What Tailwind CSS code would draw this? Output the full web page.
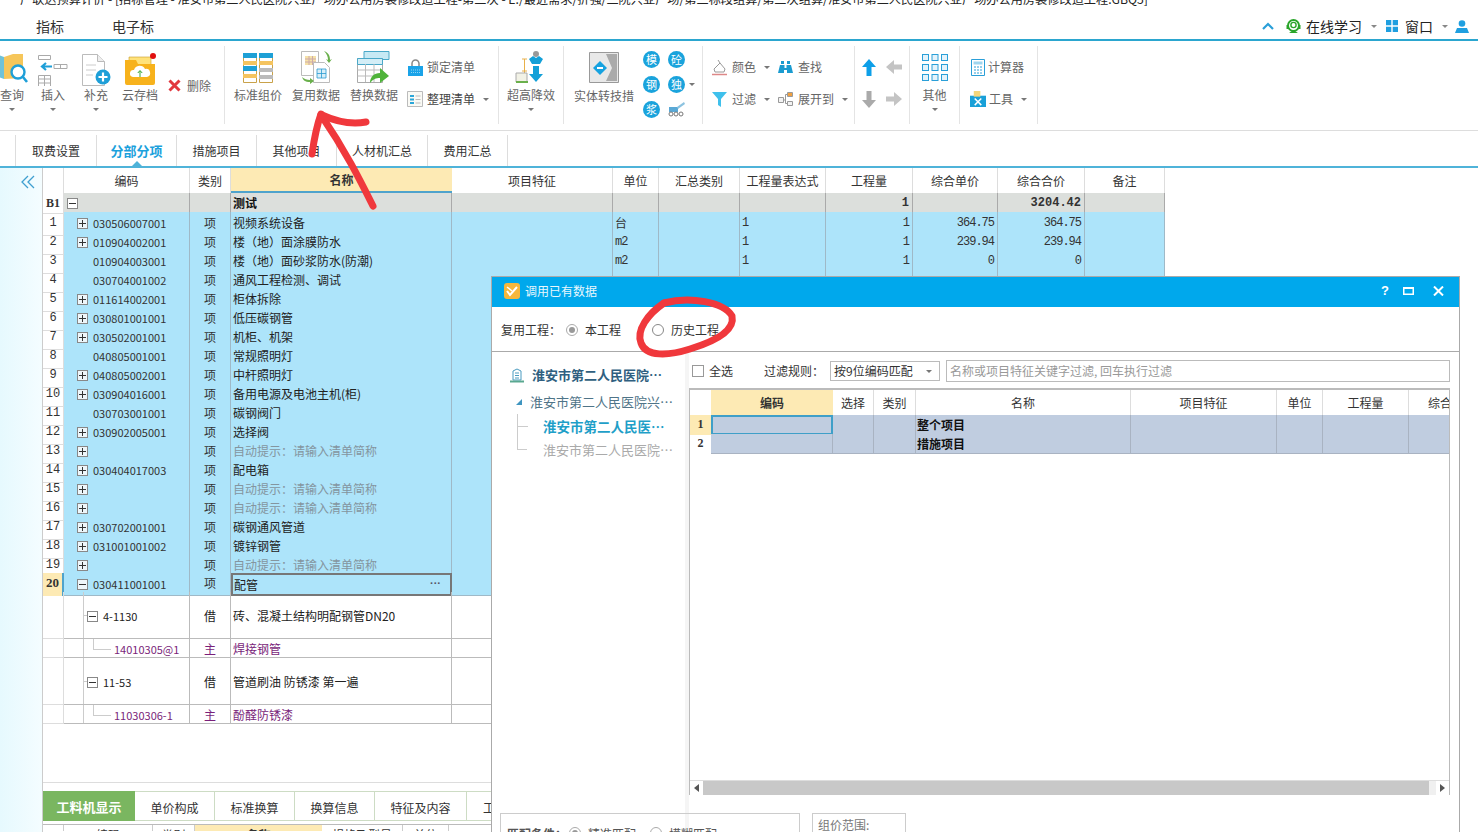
<!DOCTYPE html>
<html lang="zh-CN">
<head>
<meta charset="UTF-8">
<title>广联达预算计价</title>
<script src="https://cdn.jsdelivr.net/npm/@tailwindcss/browser@4"></script>
</head>
<body class="bg-white">
<div class="relative w-[1478px] h-[832px] overflow-hidden bg-white text-[12px] text-[#333] font-['Noto_Sans_CJK_SC',sans-serif]">

  <!-- title bar, cut off at the top -->
  <div class="h-[8px] overflow-hidden pl-[20px]">
    <div class="-mt-[10px] text-[12.2px] leading-[18px] whitespace-nowrap text-[#222]">广联达预算计价 - [招标管理 - 淮安市第二人民医院兴亚广场办公用房装修改造工程-第二次 - E:/最近需求/折强/二院兴亚广场/第二标段组算/第二次组算/淮安市第二人民医院兴亚广场办公用房装修改造工程.GBQ5]</div>
  </div>

  <!-- menu row -->
  <div class="h-[33px] border-b-[2px] border-[#2ba6cf] flex items-center text-[14px] text-[#333] pt-[5px]">
    <span class="ml-[36px]">指标</span>
    <span class="ml-[48px]">电子标</span>
    <div class="ml-auto flex items-center text-[#222]">
      <svg width="12" height="8" viewBox="0 0 12 8" class="mr-[11px]"><path d="M1 7l5-5 5 5" fill="none" stroke="#2a9fd8" stroke-width="2.2"/></svg>
      <svg width="17" height="17" viewBox="0 0 17 17" class="mr-[4px]"><circle cx="8.5" cy="7.5" r="5.5" fill="none" stroke="#2aa52a" stroke-width="2"/><circle cx="8.5" cy="7" r="2.6" fill="none" stroke="#2aa52a" stroke-width="1.4"/><path d="M1.5 7h2v4h-2zM13.5 7h2v4h-2zM4 15l4.500-3 4.500 3z" fill="#2aa52a"/></svg>
      <span>在线学习</span>
      <i class="ml-[9px] w-0 h-0 border-x-[3px] border-t-[3px] border-x-transparent border-t-[#888]"></i>
      <svg width="12" height="12" viewBox="0 0 12 12" class="ml-[9px]"><path d="M0 0h5.300v5.300H0zM6.700 0H12v5.300H6.700zM0 6.700h5.300V12H0zM6.700 6.700H12V12H6.700z" fill="#1f9fe0"/></svg>
      <span class="ml-[7px]">窗口</span>
      <i class="ml-[9px] w-0 h-0 border-x-[3px] border-t-[3px] border-x-transparent border-t-[#888]"></i>
      <svg width="14" height="13" viewBox="0 0 14 13" class="ml-[7px] mr-[9px]"><circle cx="7" cy="3.500" r="3.300" fill="#1f9fe0"/><path d="M0 13l2-5h10l2 5z" fill="#1f9fe0"/></svg>
    </div>
  </div>

  <!-- ribbon -->
  <div class="h-[90px] border-b border-[#ddd] flex pt-[5px] text-[#666] leading-[16px]">
    <div class="-ml-[4px] w-[229px] h-[78px] border-r border-[#e4e4e4] flex">
      <div class="w-[32px] flex flex-col items-center overflow-hidden">
        <svg width="36" height="36" viewBox="0 0 36 36" class="mt-[4px] shrink-0"><path d="M2 4l8 3v22l-8-3z" fill="#6fc2d8"/><path d="M10 7l9-3h10v24l-19 1z" fill="#f6c65a"/><circle cx="24" cy="22" r="6.500" fill="#fff" stroke="#1e9fd8" stroke-width="2.400"/><path d="M29 27l4 5" stroke="#1e9fd8" stroke-width="2.600"/></svg>
        <span class="mt-[1px] shrink-0 whitespace-nowrap">查询</span>
        <i class="mt-[5px] w-0 h-0 border-x-[3px] border-t-[3px] border-x-transparent border-t-[#777]"></i>
      </div>
      <div class="w-[50px] flex flex-col items-center">
        <svg width="32" height="32" viewBox="0 0 32 32" class="mt-[8px]"><path d="M1.500 1.500h12v4h-12zM1.500 21.500h12v11h-12zM1.500 25h12M1.500 29h12M7.500 21.500v11M17 10.500h13v4H17zM23.500 10.500v4" fill="none" stroke="#aaa"/><path d="M15 12.500H6M9 9l-4 3.500L9 16" fill="none" stroke="#1e9fd8" stroke-width="2.200"/></svg>
        <span class="mt-[1px]">插入</span>
        <i class="mt-[5px] w-0 h-0 border-x-[3px] border-t-[3px] border-x-transparent border-t-[#777]"></i>
      </div>
      <div class="w-[36px] flex flex-col items-center">
        <svg width="32" height="32" viewBox="0 0 32 32" class="mt-[8px]"><path d="M2.500 .5h15l7 7v24h-22z" fill="#fff" stroke="#bbb"/><path d="M17.500 .5v7h7" fill="#eee" stroke="#bbb"/><path d="M6 11h10M6 16h10M6 21h7" stroke="#ccc"/><circle cx="23" cy="23" r="7.500" fill="#1e9fd8"/><path d="M18.500 23h9M23 18.500v9" stroke="#fff" stroke-width="2.200"/></svg>
        <span class="mt-[1px]">补充</span>
        <i class="mt-[5px] w-0 h-0 border-x-[3px] border-t-[3px] border-x-transparent border-t-[#777]"></i>
      </div>
      <div class="w-[52px] flex flex-col items-center">
        <svg width="32" height="34" viewBox="0 0 32 34" class="mt-[6px]"><path d="M5 5h22v12H5z" fill="#ffe27a" stroke="#c79a2a" stroke-width=".6"/><path d="M1 8h11l2 4h17v19a2 2 0 0 1-2 2H3a2 2 0 0 1-2-2z" fill="#f7b21c"/><path d="M9 25a3.500 3.500 0 0 1 1-7 6 6 0 0 1 11-1 4 4 0 0 1 2 8z" fill="#fff"/><path d="M16 25v-6M13.800 21l2.200-2.500 2.200 2.500" fill="none" stroke="#36a436"/><circle cx="29" cy="4" r="3" fill="#e00f0f"/></svg>
        <span class="mt-[1px]">云存档</span>
        <i class="mt-[5px] w-0 h-0 border-x-[3px] border-t-[3px] border-x-transparent border-t-[#777]"></i>
      </div>
      <div class="flex-1 flex items-center pl-[2px] pb-[3px] h-[78px]">
        <svg width="13" height="13" viewBox="0 0 13 13" class="mt-[3px]"><path d="M1.500 1.500l10 10M11.500 1.500l-10 10" stroke="#e2383f" stroke-width="3"/></svg>
        <span class="ml-[6px] mt-[4px]">删除</span>
      </div>
    </div>

    <div class="w-[274px] h-[78px] border-r border-[#e4e4e4] flex">
      <div class="w-[66px] flex flex-col items-center">
        <svg width="32" height="32" viewBox="0 0 32 32" class="mt-[6px]"><path d="M1.500 1.500h13v29h-13zM17.500 1.500h13v29h-13z" fill="#fff" stroke="#c9a24a"/><path d="M1 1h14v5H1zM17 1h14v5H17zM1 14h14v5H1z" fill="#1ea0d6"/><path d="M1 9h14v4H1zM1 22h14v4H1zM17 9h14v4H17z" fill="#f5c45f"/><path d="M17 16h14v4H17zM17 23h14v4H17z" fill="#bbb"/></svg>
        <span class="mt-[3px] whitespace-nowrap">标准组价</span>
      </div>
      <div class="w-[50px] flex flex-col items-center">
        <svg width="32" height="34" viewBox="0 0 32 34" class="mt-[4px]"><path d="M1.500 1.500h17v24h-17z" fill="#fff" stroke="#bbb"/><path d="M5 6h11v9H5z" fill="#f6e2a8"/><path d="M5 9h11M5 12h11M9 6v9M12.500 6v9" stroke="#caa"/><path d="M13.500 12.500h11l5 5v15h-16z" fill="#fff" stroke="#bbb"/><path d="M17 19h9v9h-9zM17 23.500h9M21.500 19v9" fill="#d8eef8" stroke="#2a9bd0" stroke-width=".8"/><path d="M24 1c5 2 6 5 6 9l2-1-3 4-3-4 2 1c0-3-1-6-4-9z" fill="#6ab04c"/><path d="M2 27c1 3 3 5 8 5v2l4-3-4-3v2c-3 0-6-1-8-3z" fill="#6ab04c"/></svg>
        <span class="mt-[3px] whitespace-nowrap">复用数据</span>
      </div>
      <div class="w-[66px] flex flex-col items-center">
        <svg width="34" height="33" viewBox="0 0 34 33" class="mt-[5px]"><path d="M7 .5h25v8H7z" fill="#c7e9f4" stroke="#4aa8c8"/><path d="M.5 7.500h25v24H.5z" fill="#fff" stroke="#aaa"/><path d="M.5 7.500h25v6H.5z" fill="#d4eef7" stroke="#4aa8c8"/><path d="M.5 19h25M.5 25h25M8.500 13v18M17 13v18" stroke="#bbb"/><path d="M13 32c0-6 4-10 10-10v-5l9 8-9 7v-5c-4 0-7 1-10 5z" fill="#4fb33a"/></svg>
        <span class="mt-[3px] whitespace-nowrap">替换数据</span>
      </div>
      <div class="flex-1 flex flex-col pt-[10px]">
        <div class="flex items-center h-[22px]">
          <svg width="15" height="17" viewBox="0 0 15 17" class="ml-[1px]"><path d="M4 8V4.500a3.500 3.500 0 0 1 7 0V8" fill="none" stroke="#888" stroke-width="1.500"/><path d="M0 7h15v10H0z" fill="#1aa3e8"/><path d="M3 11h9M3 13.500h9" stroke="#8fd4f5" stroke-dasharray="1 1"/></svg>
          <span class="ml-[4px] whitespace-nowrap">锁定清单</span>
        </div>
        <div class="flex items-center h-[22px] mt-[10px]">
          <svg width="16" height="16" viewBox="0 0 16 16"><path d="M.5.5h15v15H.5z" fill="#fafaf5" stroke="#bbb"/><path d="M3 4h4v2H3zM3 7.500h4v2H3zM3 11h4v2H3z" fill="#2ba6d8"/><path d="M8.500 5h5M8.500 8.500h5M8.500 12h5" stroke="#bbb"/></svg>
          <span class="ml-[4px] whitespace-nowrap text-[#444]">整理清单</span>
          <i class="ml-[8px] w-0 h-0 border-x-[3px] border-t-[3px] border-x-transparent border-t-[#777]"></i>
        </div>
      </div>
    </div>

    <div class="w-[65px] h-[78px] border-r border-[#e4e4e4] flex flex-col items-center">
      <svg width="32" height="34" viewBox="0 0 32 34" class="mt-[5px]"><path d="M7 8h5M9.500 8v24M7 20h5" stroke="#e8b04a" fill="none"/><path d="M1 22h11v9H1z" fill="#f2f2e6" stroke="#aaa"/><path d="M1 31h12" stroke="#6ab04c" stroke-width="2"/><circle cx="21" cy="3" r="3" fill="#999"/><path d="M14 8l4-3 3 2 3-2 4 3-3 5h-8z" fill="#13a0d8"/><path d="M18 15h6v8h4l-7 8-7-8h4z" fill="#13a0d8"/></svg>
      <span class="mt-[2px] whitespace-nowrap">超高降效</span>
      <i class="mt-[5px] w-0 h-0 border-x-[3px] border-t-[3px] border-x-transparent border-t-[#777]"></i>
    </div>

    <div class="w-[139px] h-[78px] border-r border-[#e4e4e4] flex">
      <div class="w-[80px] flex flex-col items-center">
        <svg width="30" height="31" viewBox="0 0 30 31" class="mt-[6px]"><path d="M.5.5h29v30H.5z" fill="#e8e8e8" stroke="#999"/><path d="M17 2h11v27H17l6-13z" fill="#aaa"/><path d="M11 9l7 7-7 7-7-7z" fill="#16a2e0"/><path d="M8 16h6" stroke="#fff" stroke-width="2"/></svg>
        <span class="mt-[5px] whitespace-nowrap">实体转技措</span>
      </div>
      <div class="flex-1 grid grid-cols-[25px_25px] auto-rows-[25px] justify-start pt-[5px] -ml-[5px] text-white text-[11px] text-center leading-[17px]">
        <span class="w-[17px] h-[17px] rounded-full bg-[#1aa3dc] justify-self-center">模</span>
        <span class="w-[17px] h-[17px] rounded-full bg-[#1aa3dc] justify-self-center">砼</span>
        <span class="w-[17px] h-[17px] rounded-full bg-[#1aa3dc] justify-self-center">钢</span>
        <span class="w-[17px] h-[17px] rounded-full bg-[#1aa3dc] justify-self-center relative">独<i class="absolute left-[21px] top-[7px] w-0 h-0 border-x-[3px] border-t-[3px] border-x-transparent border-t-[#777]"></i></span>
        <span class="w-[17px] h-[17px] rounded-full bg-[#1aa3dc] justify-self-center">浆</span>
        <svg width="17" height="16" viewBox="0 0 17 16" class="justify-self-center"><path d="M1 6h9v5H1z" fill="#5aa9d6"/><path d="M9 6l7-5 1 2-7 5z" fill="#8cc3e0"/><circle cx="3" cy="13" r="2" fill="none" stroke="#777"/><circle cx="8" cy="13" r="2" fill="none" stroke="#777"/><circle cx="13" cy="13" r="2" fill="none" stroke="#777"/></svg>
      </div>
    </div>

    <div class="w-[152px] h-[78px] border-r border-[#e4e4e4] flex flex-col pl-[8px] pt-[10px]">
      <div class="flex items-center h-[22px]">
        <svg width="17" height="17" viewBox="0 0 17 17"><path d="M3 10l6-6 5 6-1 3H4z" fill="#fff" stroke="#999"/><path d="M7 1l2 3" stroke="#999"/><path d="M1 15.500h15" stroke="#d88" stroke-width="1.500"/></svg>
        <span class="ml-[4px]">颜色</span>
        <i class="ml-[8px] w-0 h-0 border-x-[3px] border-t-[3px] border-x-transparent border-t-[#777]"></i>
        <svg width="15" height="14" viewBox="0 0 15 14" class="ml-[8px]"><path d="M3 1h3v3H3zM9 1h3v3H9z" fill="#1a9bd0"/><path d="M2 5h4.500v3h2V5H13l2 8H9V10H6v3H0z" fill="#1a9bd0"/></svg>
        <span class="ml-[5px]">查找</span>
      </div>
      <div class="flex items-center h-[22px] mt-[10px]">
        <svg width="17" height="17" viewBox="0 0 17 17"><path d="M1 1h15l-6 7v8l-3-2V8z" fill="#3fc0ec"/></svg>
        <span class="ml-[4px]">过滤</span>
        <i class="ml-[8px] w-0 h-0 border-x-[3px] border-t-[3px] border-x-transparent border-t-[#777]"></i>
        <svg width="15" height="14" viewBox="0 0 15 14" class="ml-[8px]"><path d="M.5 5.500h5v5h-5zM9.500.5h5v4h-5zM9.500 9.500h5v4h-5zM5.500 8h2M7.500 2.500v9M7.500 2.500h2M7.500 11.500h2" fill="#f2f2f2" stroke="#999"/><path d="M10 1h4v3h-4z" fill="#f0a040"/></svg>
        <span class="ml-[5px] whitespace-nowrap">展开到</span>
        <i class="ml-[8px] w-0 h-0 border-x-[3px] border-t-[3px] border-x-transparent border-t-[#777]"></i>
      </div>
    </div>

    <div class="w-[55px] h-[78px] border-r border-[#e4e4e4] grid grid-cols-[25px_25px] justify-center auto-rows-[32px] pt-[5px] pr-[2px] place-items-center content-start">
      <svg width="14" height="17" viewBox="0 0 14 17"><path d="M7 0l7 8H9.500v9h-5V8H0z" fill="#0d9fe8"/></svg>
      <svg width="16" height="14" viewBox="0 0 16 14"><path d="M0 7l8-7v4.500h8v5H8V14z" fill="#c4c4c4"/></svg>
      <svg width="14" height="17" viewBox="0 0 14 17"><path d="M7 17l7-8H9.500V0h-5v9H0z" fill="#aaa"/></svg>
      <svg width="16" height="14" viewBox="0 0 16 14"><path d="M16 7L8 0v4.500H0v5h8V14z" fill="#c4c4c4"/></svg>
    </div>

    <div class="w-[50px] h-[78px] border-r border-[#e4e4e4] flex flex-col items-center">
      <svg width="26" height="27" viewBox="0 0 26 27" class="mt-[8px]"><g fill="#e4f3fb" stroke="#2a9fd8"><rect x=".5" y=".5" width="6" height="6"/><rect x="10" y=".5" width="6" height="6"/><rect x="19.500" y=".5" width="6" height="6"/><rect x=".5" y="10.500" width="6" height="6"/><rect x="10" y="10.500" width="6" height="6"/><rect x="19.500" y="10.500" width="6" height="6"/><rect x=".5" y="20.500" width="6" height="6"/><rect x="10" y="20.500" width="6" height="6"/><rect x="19.500" y="20.500" width="6" height="6"/></g></svg>
      <span class="mt-[6px]">其他</span>
      <i class="mt-[5px] w-0 h-0 border-x-[3px] border-t-[3px] border-x-transparent border-t-[#777]"></i>
    </div>

    <div class="w-[78px] h-[78px] border-r border-[#e4e4e4] flex flex-col pl-[10px] pt-[10px]">
      <div class="flex items-center h-[22px]">
        <svg width="14" height="17" viewBox="0 0 14 17" class="ml-[1px]"><path d="M.5.5h13v16H.5z" fill="#fff" stroke="#2a9fd8"/><path d="M2.500 2.500h9v3h-9z" fill="#9fd5ee"/><path d="M3 8h2M6 8h2M9 8h2M3 11h2M6 11h2M9 11h2M3 14h2M6 14h2M9 14h2" stroke="#2a9fd8"/></svg>
        <span class="ml-[3px] whitespace-nowrap">计算器</span>
      </div>
      <div class="flex items-center h-[22px] mt-[10px]">
        <svg width="16" height="16" viewBox="0 0 17 17"><path d="M0 5h17v12H0z" fill="#19a0d8"/><path d="M4 0h7v6H4z" fill="#f5d67a"/><path d="M5 8l7 7M12 8l-7 7" stroke="#fff" stroke-width="1.600"/></svg>
        <span class="ml-[3px]">工具</span>
        <i class="ml-[8px] w-0 h-0 border-x-[3px] border-t-[3px] border-x-transparent border-t-[#777]"></i>
      </div>
    </div>
  </div>

  <!-- page tabs -->
  <div class="h-[37px] border-b-[2px] border-[#4fb3d9] flex items-stretch pl-[15px] pt-[4px] text-[#333]">
    <div class="w-[81px] border-l border-[#ddd] flex items-center justify-center">取费设置</div>
    <div class="w-[80px] border-l border-[#ddd] flex items-center justify-center font-bold text-[13px] text-[#1ba1dc] relative">分部分项<i class="absolute left-[35px] bottom-0 w-0 h-0 border-x-[5px] border-b-[5px] border-x-transparent border-b-[#4fb3d9]"></i></div>
    <div class="w-[80px] border-l border-[#ddd] flex items-center justify-center">措施项目</div>
    <div class="w-[80px] border-l border-[#ddd] flex items-center justify-center">其他项目</div>
    <div class="w-[91px] border-l border-[#ddd] flex items-center justify-center">人材机汇总</div>
    <div class="w-[80px] border-l border-[#ddd] flex items-center justify-center">费用汇总</div>
    <div class="border-l border-[#ddd]"></div>
  </div>

  <!-- sheet with side strip -->
  <div class="flex">
    <div class="w-[42px] h-[664px] bg-gradient-to-r from-[#e6f9fe] to-[#f4fdff] shrink-0 flex justify-end">
      <svg width="14" height="14" viewBox="0 0 14 14" class="mt-[7px] mr-[7px]"><path d="M7 1L1 7l6 6M13 1L7 7l6 6" fill="none" stroke="#3f9fd0" stroke-width="1.300"/></svg>
    </div>
    <div class="w-[1123px] border-l border-[#ccc]">
      <div id="sheet"></div>
      <div class="h-[59px] border-b border-[#ddd]"></div>
      <div class="flex h-[30px] mt-[8px]">
        <div class="w-[92px] bg-[#7ab660] text-white font-bold text-[13px] flex items-center justify-center pt-[1px]">工料机显示</div>
        <div class="w-[80px] border-r border-y border-[#cddcc4] flex items-center justify-center pt-[3px]">单价构成</div>
        <div class="w-[80px] border-r border-y border-[#cddcc4] flex items-center justify-center pt-[3px]">标准换算</div>
        <div class="w-[80px] border-r border-y border-[#cddcc4] flex items-center justify-center pt-[3px]">换算信息</div>
        <div class="w-[92px] border-r border-y border-[#cddcc4] flex items-center justify-center pt-[3px]">特征及内容</div>
        <div class="w-[60px] border-y border-[#cddcc4] pl-[16px] flex items-center pt-[3px]">工</div>
      </div>
      <div class="flex h-[7px] mt-[3px] overflow-hidden border-t border-[#bbb] leading-[20px]">
        <span class="w-[21px] border-r border-[#ccc]"></span>
        <span class="w-[89px] border-r border-[#ccc] text-center">编码</span>
        <span class="w-[42px] border-r border-[#ccc] text-center">类别</span>
        <span class="w-[127px] bg-[#fdeab4] text-center font-bold">名称</span>
        <span class="w-[81px] border-r border-[#ccc] text-center">规格及型号</span>
        <span class="w-[46px] border-r border-[#ccc] text-center">单位</span>
      </div>
    </div>
  </div>

  <!-- dialog window -->
  <div class="absolute left-[491px] top-[276px] w-[969px] h-[556px] bg-white border-x border-t border-[#aaa] flex flex-col text-[#333]">
    <div class="h-[30px] shrink-0 bg-[#00a8ec] flex items-center pl-[12px] pb-[2px] text-white">
      <svg width="16" height="16" viewBox="0 0 16 16"><rect width="16" height="16" rx="3" fill="#f6b73c"/><path d="M3 8l3 4 7-8" fill="none" stroke="#fff" stroke-width="2"/><path d="M3 4l5 4" stroke="#fff" stroke-width="1.500"/></svg>
      <span class="ml-[5px] text-[#e8f7fd]">调用已有数据</span>
      <span class="ml-auto font-bold text-[13px] font-['Liberation_Sans',sans-serif]">?</span>
      <svg width="11" height="8" viewBox="0 0 11 8" class="ml-[14px]"><path d="M.75.75h9.500v6.500H.75z" fill="none" stroke="#fff" stroke-width="1.500"/><path d="M0 1h11" stroke="#fff" stroke-width="2"/></svg>
      <svg width="11" height="10" viewBox="0 0 11 10" class="ml-[19px] mr-[15px]"><path d="M1 .5l9 9M10 .5l-9 9" stroke="#fff" stroke-width="2"/></svg>
    </div>
    <div class="h-[45px] shrink-0 border-b border-[#aaa] flex items-center pl-[9px] pt-[1px]">
      <span>复用工程：</span>
      <span class="ml-[5px] w-[12px] h-[12px] rounded-full border border-[#aaa] flex items-center justify-center"><i class="w-[6px] h-[6px] rounded-full bg-[#999]"></i></span>
      <span class="ml-[7px]">本工程</span>
      <span class="ml-[31px] w-[12px] h-[12px] rounded-full border border-[#888]"></span>
      <span class="ml-[7px]">历史工程</span>
    </div>
    <div class="flex flex-1 min-h-0">
      <div class="w-[197px] shrink-0 border-r-[4px] border-[#f5f5f5] text-[13px]">
        <div class="flex items-center h-[24px] mt-[11px] mb-[3px] pl-[18px] font-bold text-[#2f5f80]">
          <svg width="14" height="15" viewBox="0 0 14 15"><path d="M3 3l4-2 4 2v9H3z" fill="none" stroke="#4a9bc0"/><path d="M5 5h4M5 7.500h4M5 10h4" stroke="#4a9bc0"/><path d="M0 13.500h14" stroke="#5aa890" stroke-width="2"/></svg>
          <span class="ml-[8px] whitespace-nowrap">淮安市第二人民医院⋯</span>
        </div>
        <div class="flex items-center h-[24px] pl-[24px] text-[#4f7488]">
          <i class="w-0 h-0 border-l-[6px] border-b-[6px] border-l-transparent border-b-[#3f95c0]"></i>
          <span class="ml-[8px] whitespace-nowrap">淮安市第二人民医院兴⋯</span>
        </div>
        <div class="flex items-center h-[24px] pl-[25px]">
          <i class="w-[10px] h-[24px] border-l border-[#ccc] relative after:absolute after:left-0 after:top-[12px] after:w-[10px] after:border-t after:border-[#ccc]"></i>
          <span class="ml-[16px] font-bold text-[13.5px] text-[#1f9fc8] whitespace-nowrap">淮安市第二人民医⋯</span>
        </div>
        <div class="flex items-center h-[24px] pl-[25px]">
          <i class="w-[10px] h-[12px] -mt-[12px] border-l border-b border-[#ccc]"></i>
          <span class="ml-[16px] text-[#aaa] whitespace-nowrap">淮安市第二人民医院⋯</span>
        </div>
      </div>
      <div class="w-[761px] shrink-0">
        <div class="flex items-center h-[20px] mt-[9px]">
          <span class="ml-[3px] w-[12px] h-[12px] border border-[#999]"></span>
          <span class="ml-[5px]">全选</span>
          <span class="ml-[31px]">过滤规则：</span>
          <div class="ml-[6px] w-[110px] h-[20px] border border-[#bbb] flex items-center pl-[3px]"><span>按9位编码匹配</span><i class="ml-auto mr-[7px] w-0 h-0 border-x-[3px] border-t-[3px] border-x-transparent border-t-[#777]"></i></div>
          <div class="ml-[6px] flex-1 h-[22px] border border-[#bbb] flex items-center pl-[3px] text-[#999]">名称或项目特征关键字过滤, 回车执行过滤</div>
        </div>
        <div class="mt-[7px] h-[407px] border-t-2 border-x border-[#bbb] relative overflow-hidden">
          <div class="grid grid-cols-[21px_122px_41px_42px_215px_146px_46px_86px_42px] h-[25px] items-center text-center">
            <span></span>
            <span class="h-full bg-[#fdeab4] font-bold flex items-center justify-center">编码</span>
            <span class="h-full border-r border-[#ddd] flex items-center justify-center">选择</span>
            <span class="h-full border-r border-[#ddd] flex items-center justify-center">类别</span>
            <span class="h-full border-r border-[#ddd] flex items-center justify-center">名称</span>
            <span class="h-full border-r border-[#ddd] flex items-center justify-center">项目特征</span>
            <span class="h-full border-r border-[#ddd] flex items-center justify-center">单位</span>
            <span class="h-full border-r border-[#ddd] flex items-center justify-center">工程量</span>
            <span class="h-full flex items-center pl-[19px] whitespace-nowrap overflow-hidden">综合</span>
          </div>
          <div class="grid grid-cols-[21px_122px_41px_42px_215px_146px_46px_86px_42px] h-[19px] leading-[19px]">
            <span class="bg-[#fdeab4] font-bold text-center font-['Liberation_Serif',serif]">1</span>
            <span class="bg-[#c0cde0] border-2 border-[#3f9fc8]"></span>
            <span class="bg-[#c0cde0] border-r border-b border-[#a9b3c2]"></span>
            <span class="bg-[#c0cde0] border-r border-b border-[#a9b3c2]"></span>
            <span class="bg-[#c0cde0] border-r border-b border-[#a9b3c2] font-bold text-[#111] pl-[1px]">整个项目</span>
            <span class="bg-[#c0cde0] border-r border-b border-[#a9b3c2]"></span>
            <span class="bg-[#c0cde0] border-r border-b border-[#a9b3c2]"></span>
            <span class="bg-[#c0cde0] border-r border-b border-[#a9b3c2]"></span>
            <span class="bg-[#c0cde0] border-b border-[#a9b3c2]"></span>
          </div>
          <div class="grid grid-cols-[21px_122px_41px_42px_215px_146px_46px_86px_42px] h-[19px] leading-[19px]">
            <span class="font-bold text-center font-['Liberation_Serif',serif]">2</span>
            <span class="bg-[#c0cde0] border-r border-b border-[#a9b3c2]"></span>
            <span class="bg-[#c0cde0] border-r border-b border-[#a9b3c2]"></span>
            <span class="bg-[#c0cde0] border-r border-b border-[#a9b3c2]"></span>
            <span class="bg-[#c0cde0] border-r border-b border-[#a9b3c2] font-bold text-[#111] pl-[1px]">措施项目</span>
            <span class="bg-[#c0cde0] border-r border-b border-[#a9b3c2]"></span>
            <span class="bg-[#c0cde0] border-r border-b border-[#a9b3c2]"></span>
            <span class="bg-[#c0cde0] border-r border-b border-[#a9b3c2]"></span>
            <span class="bg-[#c0cde0] border-b border-[#a9b3c2]"></span>
          </div>
          <div class="absolute left-0 right-0 bottom-0 h-[15px] bg-[#f0f0f0] border-t border-[#ddd] flex">
            <span class="w-[13px] bg-white flex items-center justify-center"><i class="w-0 h-0 border-y-[4px] border-r-[5px] border-y-transparent border-r-[#555]"></i></span>
            <span class="w-[726px] bg-[#c8c8c8]"></span>
            <span class="ml-auto w-[13px] bg-white flex items-center justify-center"><i class="w-0 h-0 border-y-[4px] border-l-[5px] border-y-transparent border-l-[#555]"></i></span>
          </div>
        </div>
      </div>
    </div>
    <div class="absolute left-[8px] top-[536px] flex items-start">
      <div class="w-[300px] h-[40px] border border-[#ccc] flex items-start pl-[6px] pt-[11px] text-[#555]">
        <span class="font-bold">匹配条件：</span>
        <span class="ml-[2px] mt-[2px] w-[12px] h-[12px] rounded-full border border-[#aaa] flex items-center justify-center"><i class="w-[6px] h-[6px] rounded-full bg-[#999]"></i></span>
        <span class="ml-[7px]">精准匹配</span>
        <span class="ml-[14px] mt-[2px] w-[12px] h-[12px] rounded-full border border-[#aaa]"></span>
        <span class="ml-[7px]">模糊匹配</span>
      </div>
      <div class="ml-[12px] w-[94px] h-[40px] border border-[#ccc] pl-[5px] pt-[2px] text-[#777]">组价范围:</div>
    </div>
  </div>

  <!-- red marks drawn over the screenshot -->
  <svg class="absolute left-0 top-0 pointer-events-none" width="1478" height="832" viewBox="0 0 1478 832" fill="none" stroke="#f0383c" stroke-linecap="round" stroke-linejoin="round">
    <path d="M373 206C360 180 345 150 321 115" stroke-width="7"/>
    <path d="M321 114C317 125 314 140 312 154" stroke-width="7"/>
    <path d="M322 115C335 121 350 125 366 122" stroke-width="7"/>
    <path d="M664 303C690 296 724 302 732 316C735 330 716 341 690 349C668 356 646 357 641 343C636 330 648 314 664 303" stroke-width="7"/>
  </svg>
</div>

<script>
  const COLS = 'grid grid-cols-[21px_126px_41px_221px_161px_46px_81px_86px_87px_85px_87px_80px]';
  const HINT = '自动提示：请输入清单简称';
  const data = [
    ['+','030506007001','视频系统设备','台','1','1','364.75','364.75'],
    ['+','010904002001','楼（地）面涂膜防水','m2','1','1','239.94','239.94'],
    ['','010904003001','楼（地）面砂浆防水(防潮)','m2','1','1','0','0'],
    ['','030704001002','通风工程检测、调试'],
    ['+','011614002001','柜体拆除'],
    ['+','030801001001','低压碳钢管'],
    ['+','030502001001','机柜、机架'],
    ['','040805001001','常规照明灯'],
    ['+','040805002001','中杆照明灯'],
    ['+','030904016001','备用电源及电池主机(柜)'],
    ['','030703001001','碳钢阀门'],
    ['+','030902005001','选择阀'],
    ['+','',HINT],
    ['+','030404017003','配电箱'],
    ['+','',HINT],
    ['+','',HINT],
    ['+','030702001001','碳钢通风管道'],
    ['+','031001001002','镀锌钢管'],
    ['+','',HINT],
  ];
  const CELL = 'border-r border-b border-[#9fb9c7] bg-[#ade4fa] whitespace-nowrap overflow-hidden';
  const DIGIT = 'text-[11px]';
  const MONO = "font-['Liberation_Mono',monospace] text-[12px] tracking-[-1px] leading-[23px]";
  const box = (sign, extra = '') => `<span class="inline-flex w-[11px] h-[11px] shrink-0 border border-[#888] bg-[#eef6fa] items-center justify-center relative ${extra}"><i class="absolute w-[7px] h-px bg-[#333]"></i>${sign === '+' ? '<i class="absolute w-px h-[7px] bg-[#333]"></i>' : ''}</span>`;

  function header() {
    const names = ['', '编码', '类别', '名称', '项目特征', '单位', '汇总类别', '工程量表达式', '工程量', '综合单价', '综合合价', '备注'];
    return `<div class="${COLS} h-[25px] text-[#333]">` + names.map((n, i) => i === 3
      ? `<div class="bg-[#fdeab4] border-b-2 border-[#4fa3cc] font-bold flex items-center justify-center">${n}</div>`
      : `<div class="border-r border-[#ddd] flex items-center justify-center whitespace-nowrap">${n}</div>`).join('') + '</div>';
  }

  function dataRow(row, no) {
    const [sign, code, name, unit = '', expr = '', qty = '', price = '', total = ''] = row;
    const isHint = name === HINT;
    return `<div class="${COLS} h-[19px] leading-[21px]">
      <div class="border-r border-b border-[#ddd] text-center font-['Liberation_Mono',monospace] text-[12px] leading-[23px]">${no}</div>
      <div class="${CELL} flex items-center pl-[13px] ${DIGIT}">${sign ? box(sign) : '<span class="w-[11px] shrink-0"></span>'}<span class="ml-[5px]">${code}</span></div>
      <div class="${CELL} text-center">项</div>
      <div class="${CELL} pl-[2px] ${isHint ? 'text-[#84959f]' : 'text-[#222]'}">${name}</div>
      <div class="${CELL}"></div>
      <div class="${CELL} pl-[2px] ${unit === '台' ? '' : MONO}">${unit}</div>
      <div class="${CELL}"></div>
      <div class="${CELL} pl-[2px] ${MONO}">${expr}</div>
      <div class="${CELL} pr-[3px] text-right ${MONO}">${qty}</div>
      <div class="${CELL} pr-[3px] text-right ${MONO}">${price}</div>
      <div class="${CELL} pr-[3px] text-right ${MONO}">${total}</div>
      <div class="${CELL}"></div>
    </div>`;
  }

  const plain = 'border-r border-b border-[#bbb] whitespace-nowrap overflow-hidden';
  const empties = n => Array(n).fill(`<div class="${plain}"></div>`).join('');

  function subRow(h, code, kind, name, purple, indent, hasBox) {
    const color = purple ? 'text-[#7a1f7a]' : 'text-[#222]';
    const tree = hasBox
      ? `<i class="absolute left-[19px] top-0 bottom-0 border-l border-[#ccc]"></i><i class="absolute left-[19px] top-1/2 w-[4px] border-t border-[#ccc]"></i>`
      : `<i class="absolute left-[19px] top-0 bottom-0 border-l border-[#ccc]"></i><i class="absolute left-[29px] top-0 h-[10px] border-l border-[#ccc]"></i><i class="absolute left-[29px] top-[10px] w-[18px] border-t border-[#ccc]"></i>`;
    return `<div class="${COLS} leading-[18px] items-stretch" style="height:${h}px">
      <div class="border-r border-b border-[#ddd]"></div>
      <div class="${plain} relative flex items-center pt-[2px] ${DIGIT} ${color}" style="padding-left:${indent}px">${tree}${hasBox ? box('-', 'bg-white mr-[5px]') : ''}<span>${code}</span></div>
      <div class="${plain} flex items-center justify-center pt-[2px] ${color}">${kind}</div>
      <div class="${plain} flex items-center pl-[2px] pt-[2px] ${color}">${name}</div>
      ${empties(8)}
    </div>`;
  }

  const b1 = `<div class="${COLS} h-[19px] leading-[20px] font-bold">
    <div class="border-r border-b border-[#ddd] text-center font-['Liberation_Serif',serif]">B1</div>
    <div class="bg-[#dcdfdc] border-r border-b border-[#aaa] flex items-center pl-[3px]">${box('-', 'bg-white')}</div>
    <div class="bg-[#dcdfdc] border-r border-b border-[#aaa]"></div>
    <div class="bg-[#dcdfdc] border-r border-b border-[#aaa] pl-[2px] text-[#111]">测试</div>
    <div class="bg-[#dcdfdc] border-r border-b border-[#aaa]"></div>
    <div class="bg-[#dcdfdc] border-r border-b border-[#aaa]"></div>
    <div class="bg-[#dcdfdc] border-r border-b border-[#aaa]"></div>
    <div class="bg-[#dcdfdc] border-r border-b border-[#aaa]"></div>
    <div class="bg-[#dcdfdc] border-r border-b border-[#aaa] text-right pr-[3px] font-['Liberation_Mono',monospace]">1</div>
    <div class="bg-[#dcdfdc] border-r border-b border-[#aaa]"></div>
    <div class="bg-[#dcdfdc] border-r border-b border-[#aaa] text-right pr-[3px] font-['Liberation_Mono',monospace]">3204.42</div>
    <div class="bg-[#dcdfdc] border-r border-b border-[#aaa]"></div>
  </div>`;

  const selected = `<div class="${COLS} h-[19px] leading-[19px]">
    <div class="bg-[#fdeab4] border-r-2 border-[#4fa3cc] text-center font-bold font-['Liberation_Serif',serif] text-[13px]">20</div>
    <div class="${CELL} flex items-center pl-[13px] ${DIGIT}">${box('-')}<span class="ml-[5px]">030411001001</span></div>
    <div class="${CELL} text-center">项</div>
    <div class="bg-[#ade4fa] border-2 border-[#777] pl-[1px] flex items-center text-[#222]">配管<span class="ml-auto mr-[9px] -mt-[3px] text-[#556] font-bold text-[11px] font-['Liberation_Sans',sans-serif]">···</span></div>
    ${Array(8).fill(`<div class="${CELL}"></div>`).join('')}
  </div>`;

  document.getElementById('sheet').innerHTML = header() + b1
    + data.map((r, i) => dataRow(r, i + 1)).join('')
    + selected
    + subRow(47, '4-1130', '借', '砖、混凝土结构明配钢管DN20', false, 23, true)
    + subRow(19, '14010305@1', '主', '焊接钢管', true, 50, false)
    + subRow(47, '11-53', '借', '管道刷油 防锈漆 第一遍', false, 23, true)
    + subRow(19, '11030306-1', '主', '酚醛防锈漆', true, 50, false);
</script>
</body>
</html>
